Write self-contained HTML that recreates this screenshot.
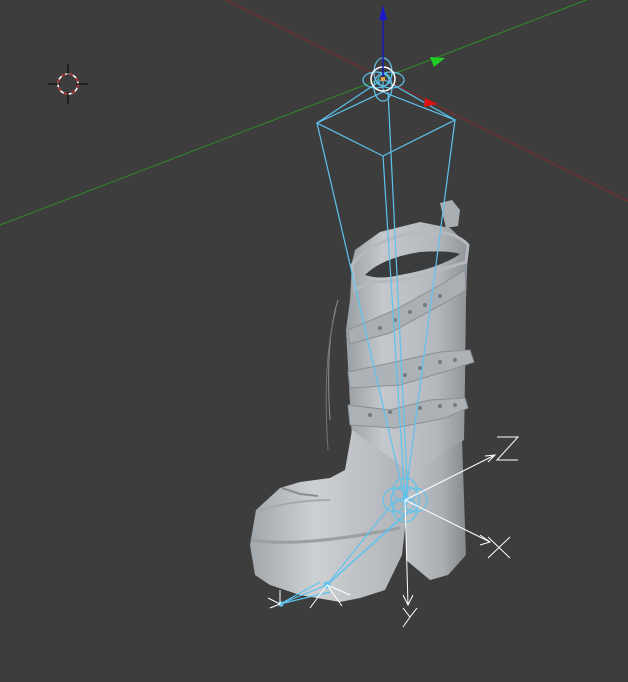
<!DOCTYPE html>
<html><head><meta charset="utf-8"><style>
html,body{margin:0;padding:0;background:#3d3d3d;width:628px;height:682px;overflow:hidden}
svg{display:block}
</style></head><body>
<svg width="628" height="682" viewBox="0 0 628 682" xmlns="http://www.w3.org/2000/svg">
<defs>
<linearGradient id="g1" x1="0" y1="0" x2="1" y2="0">
<stop offset="0" stop-color="#9a9fa4"/><stop offset="0.3" stop-color="#c4c8cc"/><stop offset="0.75" stop-color="#b4b8bc"/><stop offset="1" stop-color="#8f9499"/>
</linearGradient>
<linearGradient id="g2" x1="0" y1="0" x2="1" y2="0">
<stop offset="0" stop-color="#c0c4c8"/><stop offset="0.6" stop-color="#aaafb3"/><stop offset="1" stop-color="#858a8f"/>
</linearGradient>
<linearGradient id="g3" x1="0" y1="0" x2="1" y2="0">
<stop offset="0" stop-color="#a2a7ac"/><stop offset="0.4" stop-color="#cdd0d3"/><stop offset="1" stop-color="#aeb2b6"/>
</linearGradient>
</defs>
<rect width="628" height="682" fill="#3d3d3d"/>
<line x1="226" y1="0" x2="628" y2="201" stroke="#8a2a2a" stroke-width="1"/>
<line x1="0" y1="225" x2="628" y2="-16" stroke="#2f8a2a" stroke-width="1"/>
<circle cx="68" cy="84" r="10" fill="none" stroke="#fff" stroke-width="1.5"/>
<circle cx="68" cy="84" r="10" fill="none" stroke="#b22222" stroke-width="1.5" stroke-dasharray="4 4"/>
<line x1="48" y1="84" x2="60" y2="84" stroke="#000"/><line x1="76" y1="84" x2="88" y2="84" stroke="#000"/>
<line x1="68" y1="64" x2="68" y2="76" stroke="#000"/><line x1="68" y1="92" x2="68" y2="104" stroke="#000"/>
<g>
<path d="M405 470 L462 440 L466 555 L448 575 L430 580 L406 560 Z" fill="url(#g2)"/>
<path d="M352 262 L350 300 L346 330 L352 440 L348 470 L410 475 L464 440 L465 380 L466 300 L468 245 L450 228 L420 222 L380 232 L355 250 Z" fill="url(#g1)"/>
<path d="M440 203 L452 200 L460 210 L458 226 L446 228 Z" fill="#a9aeb2"/>
<path d="M365 275 Q382 258 420 252 Q448 250 460 254 Q440 268 400 275 Q380 280 365 275 Z" fill="#3a3b3d"/>
<path d="M352 265 Q370 240 420 232 Q455 230 468 245 L466 262 Q440 270 420 276 Q395 282 370 282 L355 290 Z" fill="none" stroke="#b6babe" stroke-width="3"/>
<path d="M352 430 L345 470 L330 478 L300 482 L280 488 L256 510 L250 545 L255 575 L270 585 L300 595 L340 602 L360 598 L385 590 L402 555 L406 520 L410 472 Z" fill="url(#g3)"/>
<path d="M252 540 Q300 548 400 528" fill="none" stroke="#9a9fa3" stroke-width="3"/>
<path d="M256 512 Q290 500 330 500" fill="none" stroke="#a4a9ad" stroke-width="2"/>
<path d="M282 488 L300 494 L318 496" fill="none" stroke="#888d92" stroke-width="2"/>
<path d="M348 330 L350 344 L390 333 L450 300 L466 290 L465 270 L440 285 L395 310 Z" fill="#aaafb3" stroke="#8a8f94"/>
<path d="M348 372 L350 388 L400 385 L450 370 L474 362 L470 350 L440 352 L395 362 Z" fill="#adb2b6" stroke="#8a8f94"/>
<path d="M348 405 L350 425 L395 428 L445 418 L468 408 L465 398 L430 400 L390 410 Z" fill="#adb2b6" stroke="#8a8f94"/>
<g fill="#747a7f">
<circle cx="380" cy="328" r="2"/><circle cx="395" cy="320" r="2"/><circle cx="410" cy="312" r="2"/><circle cx="425" cy="305" r="2"/><circle cx="440" cy="296" r="2"/>
<circle cx="405" cy="375" r="2"/><circle cx="420" cy="368" r="2"/><circle cx="440" cy="362" r="2"/><circle cx="455" cy="360" r="2"/>
<circle cx="370" cy="415" r="2"/><circle cx="390" cy="412" r="2"/><circle cx="420" cy="408" r="2"/><circle cx="440" cy="406" r="2"/><circle cx="455" cy="405" r="2"/>
</g>
<path d="M338 300 Q325 340 330 420" fill="none" stroke="#8a8f94" stroke-width="1"/>
<path d="M336 310 Q322 360 328 450" fill="none" stroke="#6f7378" stroke-width="1"/>
</g>
<g stroke="#5fc3ee" stroke-width="1.2" fill="none">
<path d="M317 123 L383 92 L455 120 L383 156 Z"/>
<line x1="317" y1="123" x2="383" y2="79"/><line x1="455" y1="120" x2="383" y2="79"/><line x1="383" y1="92" x2="383" y2="79"/>
<line x1="317" y1="123" x2="405" y2="500"/><line x1="455" y1="120" x2="405" y2="500"/><line x1="383" y1="156" x2="405" y2="500"/><line x1="388" y1="92" x2="408" y2="500"/>
<ellipse cx="383" cy="72" rx="9" ry="14"/><ellipse cx="383" cy="87" rx="9" ry="14"/>
<ellipse cx="376" cy="80" rx="13" ry="8"/><ellipse cx="391" cy="80" rx="13" ry="8"/>
<circle cx="405" cy="500" r="14"/><circle cx="405" cy="490" r="12"/><circle cx="405" cy="510" r="12"/>
<circle cx="395" cy="500" r="12"/><circle cx="415" cy="500" r="12"/>
<line x1="395" y1="500" x2="327" y2="585"/><line x1="415" y1="505" x2="327" y2="585"/><line x1="405" y1="515" x2="327" y2="585"/>
<line x1="327" y1="585" x2="280" y2="604"/><line x1="320" y1="582" x2="280" y2="604"/><line x1="330" y1="592" x2="280" y2="604"/>
<circle cx="327" cy="585" r="3" fill="#5fc3ee"/><circle cx="281" cy="604" r="2" fill="#5fc3ee"/>
</g>
<circle cx="383" cy="79" r="12" fill="none" stroke="#fff" stroke-width="1.5"/>
<line x1="383" y1="78" x2="383" y2="10" stroke="#1a1ab8" stroke-width="1.5"/>
<path d="M379 20 L383 5 L387 20 Z" fill="#1a1acc"/>
<path d="M430 57 L445 58 L434 67 Z" fill="#22cc22"/>
<path d="M425 98 L438 104 L424 107 Z" fill="#dd1111"/>
<rect x="381" y="77" width="4" height="4" fill="#e0a050"/>
<g stroke="#fff" stroke-width="1" fill="none">
<line x1="405" y1="500" x2="495" y2="455"/><path d="M485 456 L495 455 L488 462"/>
<path d="M497 437 L518 437 L497 460 L518 460"/>
<line x1="405" y1="500" x2="490" y2="542"/><path d="M480 535 L490 542 L480 545"/>
<path d="M488 537 L510 558 M510 537 L488 558"/>
<line x1="405" y1="500" x2="408" y2="605"/><path d="M403 595 L408 605 L413 595"/>
<path d="M403 608 L410 617 L417 608 M410 617 L403 627"/>
<line x1="280" y1="604" x2="280" y2="590"/><line x1="280" y1="604" x2="268" y2="598"/><line x1="280" y1="604" x2="270" y2="608"/>
<line x1="327" y1="585" x2="342" y2="606"/><line x1="327" y1="585" x2="350" y2="595"/><line x1="327" y1="585" x2="310" y2="608"/>
</g>
</svg>
</body></html>
